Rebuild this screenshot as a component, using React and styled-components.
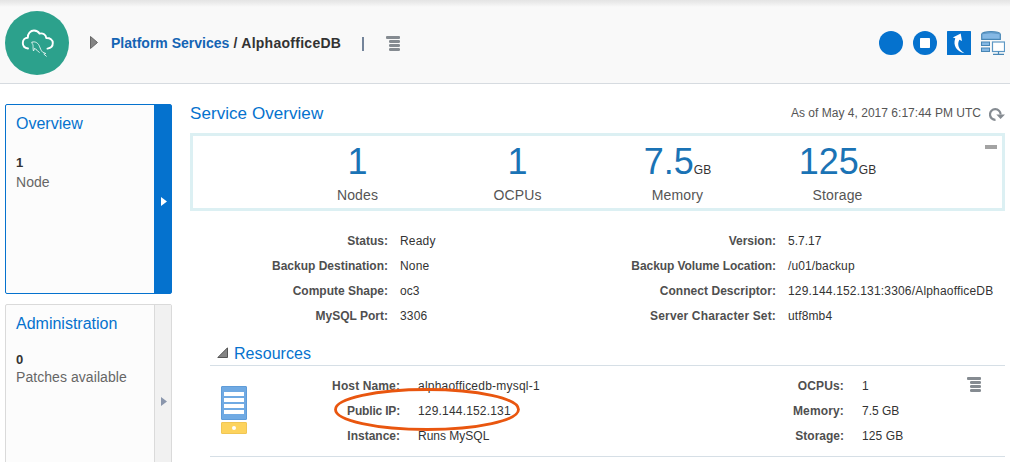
import React from 'react';
import styled, { createGlobalStyle } from 'styled-components';

const GlobalStyle = createGlobalStyle`
  * { box-sizing: border-box; }
  body {
    margin: 0;
    background: #fff;
    font-family: "Liberation Sans", Arial, sans-serif;
    font-size: 12px;
    color: #333;
    overflow: hidden;
  }
`;

const Page = styled.div`
  width: 1010px;
  height: 462px;
  overflow: hidden;
`;

const Header = styled.header`
  display: flex;
  align-items: center;
  height: 84px;
  padding: 2px 5px 0;
  border-bottom: 1px solid #d6dbe0;
  background: linear-gradient(#e4e4e4, #ececec 3px, #f9f9f9 7px);
`;

const Logo = styled.svg`
  width: 64px;
  height: 64px;
  margin-right: 21px;
`;

const Expander = styled.svg`
  width: 8px;
  height: 13px;
  margin-right: 13px;
`;

const Crumbs = styled.h1`
  margin: 0;
  font-size: 14px;
  line-height: 18px;
  font-weight: bold;
  white-space: pre;
  color: #333;
`;

const CrumbLink = styled.span`
  color: #1464b4;
`;

const CrumbCurrent = styled.span`
  letter-spacing: 0.27px;
`;

const Separator = styled.span`
  width: 2px;
  height: 14px;
  margin: 2px 22px 0 21px;
  background: #74849a;
`;

const MenuGlyph = styled.svg`
  flex: none;
  width: 14px;
  height: 15px;
  margin-top: ${(p) => p.$top || 0}px;
`;

const Actions = styled.div`
  display: flex;
  gap: 10px;
  margin-left: auto;

  svg {
    display: block;
    width: 24px;
    height: 24px;
  }
`;

const Body = styled.div`
  display: flex;
  align-items: flex-start;
  padding: 20px 5px 0;
`;

const Sidebar = styled.nav`
  display: flex;
  flex-direction: column;
  gap: 10px;
  width: 167px;
  margin-right: 18px;
`;

const Tile = styled.section`
  display: flex;
  height: 190px;
  border: 1px solid ${(p) => (p.$active ? '#0572ce' : '#dadada')};
  border-radius: 2px;
  background: #fcfcfc;
`;

const TileContent = styled.div`
  flex: 1;
  padding: 9px 0 0 10px;
`;

const TileTitle = styled.h2`
  margin: 0;
  font-size: 16px;
  line-height: 20px;
  font-weight: normal;
  color: #0572ce;
`;

const TileCount = styled.div`
  margin-top: ${(p) => p.$top}px;
  font-size: 13px;
  line-height: 18px;
  font-weight: bold;
`;

const TileLabel = styled.div`
  margin-top: ${(p) => p.$top}px;
  font-size: 14px;
  line-height: 18px;
  letter-spacing: 0.06px;
  color: #666;
`;

const TileStrip = styled.div`
  display: flex;
  align-items: center;
  justify-content: center;
  width: 17px;
  padding: 5px 0 0 2px;
  border-left: 1px solid ${(p) => (p.$active ? '#0572ce' : '#dadada')};
  background: ${(p) => (p.$active ? '#0572ce' : '#f1f1f1')};
  color: ${(p) => (p.$active ? '#fff' : '#8a96ac')};
`;

const Main = styled.main`
  width: 815px;
`;

const TitleRow = styled.div`
  display: flex;
  justify-content: space-between;
  height: 29px;
`;

const Title = styled.h2`
  margin: 0;
  font-size: 17px;
  line-height: 19px;
  font-weight: normal;
  letter-spacing: 0.06px;
  color: #0572ce;
`;

const Timestamp = styled.div`
  display: flex;
  gap: 8px;
  line-height: 18px;
  letter-spacing: 0.02px;
  color: #555;

  svg {
    width: 16px;
    height: 14px;
    margin-top: 3px;
  }
`;

const Summary = styled.section`
  display: flex;
  height: 78px;
  padding: 0 5px 0 84px;
  border: 3px solid #dcf0f3;
`;

const Metric = styled.div`
  width: 160px;
  padding-left: 1px;
  text-align: center;
`;

const MetricValue = styled.div`
  height: 42px;
  margin-top: 5px;
  font-size: 36px;
  line-height: 42px;
  color: #1a73b5;
`;

const Unit = styled.span`
  font-size: 12px;
  line-height: 1;
  color: #333;
`;

const MetricLabel = styled.div`
  margin-top: 3px;
  font-size: 14px;
  line-height: 18px;
  letter-spacing: 0.15px;
  color: #555;
`;

const Collapse = styled.span`
  width: 12px;
  height: 4px;
  margin: 9px 0 0 auto;
  background: #a3a3a3;
`;

const Details = styled.div`
  display: flex;
  padding-top: 18px;
`;

const List = styled.dl`
  display: grid;
  grid-template-columns: ${(p) => p.$label}px auto;
  grid-auto-rows: 25px;
  justify-content: start;
  column-gap: ${(p) => p.$gap}px;
  width: ${(p) => p.$width}px;
  margin: 0;
  line-height: 25px;
  white-space: nowrap;
`;

const Term = styled.dt`
  font-weight: bold;
  text-align: right;
  letter-spacing: ${(p) => p.$tracking || 0}px;
  color: #4f4f4f;
`;

const Value = styled.dd`
  margin: 0;
  letter-spacing: ${(p) => p.$tracking || 0}px;
  color: #333;
`;

const Resources = styled.section`
  margin: 14px 0 0 20px;
`;

const ResourcesHeader = styled.div`
  display: flex;
  align-items: center;
  gap: 6px;
  height: 23px;
  padding: 0 0 1px 7px;
  border-bottom: 1px solid #d6dfe6;

  svg {
    width: 11px;
    height: 11px;
    margin-top: -2px;
  }
`;

const ResourcesTitle = styled.h3`
  margin: 0;
  font-size: 16px;
  line-height: 20px;
  font-weight: normal;
  letter-spacing: 0.07px;
  color: #0572ce;
`;

const Resource = styled.div`
  position: relative;
  display: flex;
  height: 91px;
  padding: 8px 0 0 11px;
  border-bottom: 1px solid #d6dfe6;
`;

const ServerGlyph = styled.svg`
  flex: none;
  width: 26px;
  height: 48px;
  margin: 12px 43px 0 0;
`;

const Highlight = styled.svg`
  position: absolute;
  left: 123px;
  top: 21px;
  width: 188px;
  height: 45px;
`;

function MenuIcon({ top }) {
  return (
    <MenuGlyph $top={top} viewBox="0 0 14 15" fill="#858b91">
      <rect x="0" y="0" width="14" height="3" rx="1" />
      <rect x="3" y="4" width="11" height="3" rx="1.3" />
      <rect x="3" y="8" width="11" height="3" rx="1.3" />
      <rect x="3" y="12" width="11" height="3" rx="1.3" />
    </MenuGlyph>
  );
}

function StripArrow() {
  return (
    <svg width="6" height="9" viewBox="0 0 6 9">
      <path d="M0 0 6 4.5 0 9Z" fill="currentColor" />
    </svg>
  );
}

function SideTile({ title, count, label, active }) {
  return (
    <Tile $active={active}>
      <TileContent>
        <TileTitle>{title}</TileTitle>
        <TileCount $top={active ? 20 : 17}>{count}</TileCount>
        <TileLabel $top={active ? 1 : -1}>{label}</TileLabel>
      </TileContent>
      <TileStrip $active={active}><StripArrow /></TileStrip>
    </Tile>
  );
}

function DetailList({ items, label, gap, width }) {
  return (
    <List $label={label} $gap={gap} $width={width}>
      {items.map(([term, value, termTracking, valueTracking]) => (
        <React.Fragment key={term}>
          <Term $tracking={termTracking}>{term}:</Term>
          <Value $tracking={valueTracking}>{value}</Value>
        </React.Fragment>
      ))}
    </List>
  );
}

const metrics = [
  ['1', '', 'Nodes'],
  ['1', '', 'OCPUs'],
  ['7.5', 'GB', 'Memory'],
  ['125', 'GB', 'Storage'],
];

export default function App() {
  return (
    <Page>
      <GlobalStyle />
      <Header>
        <Logo viewBox="0 0 64 64">
          <circle cx="32" cy="32" r="32" fill="#2ca18c" />
          <g fill="none" stroke="#fff" strokeLinecap="round" strokeLinejoin="round">
            <path d="M23 37.5C19.5 37 17.8 34.8 17.8 32c0-3 2.100-5.200 5-5.200C22.500 22.500 25.500 19.500 29 19.500c2.500 0 4.500 1.200 5.500 3.100 3.700-.8 6.300 1.200 6.800 4.400 3.700-.2 6.500 1.700 6.500 5.100 0 3-2 5.200-5.300 5.500" strokeWidth="1.9" />
            <path d="M27 31.200c2.700-1 5.500.3 7 3.100 1.200 2.200 1.500 4.700 3.500 6.700l3.300 1.500-2 .5 2.500 2.200M27 31.200c-.5 1 .8 1.700 1 3 .2 1.600-.2 3.400.5 5.800l1.200-2.800 1.300 1.300M31 38.500l3.500 3" strokeWidth=".8" strokeDasharray="1.8 .8" />
          </g>
        </Logo>
        <Expander viewBox="0 0 8 13">
          <path d="M.5.500 7.500 6.500.5 12.500Z" fill="#858585" stroke="#666" />
        </Expander>
        <Crumbs>
          <CrumbLink>Platform Services</CrumbLink>
          <CrumbCurrent> / AlphaofficeDB</CrumbCurrent>
        </Crumbs>
        <Separator />
        <MenuIcon top={2} />
        <Actions>
          <svg viewBox="0 0 24 24"><circle cx="12" cy="12" r="12" fill="#0572ce" /></svg>
          <svg viewBox="0 0 24 24">
            <circle cx="12" cy="12" r="12" fill="#0572ce" />
            <rect x="7" y="7" width="10" height="10" rx=".7" fill="#fff" />
          </svg>
          <svg viewBox="0 0 24 24">
            <rect width="24" height="24" rx=".5" fill="#0572ce" />
            <path d="M13.700 2.500 15 10 12.400 8.700C9.800 13 11.500 18.500 17.500 22.200 10 21 5.500 14.500 8.300 7.300L5.800 6.500Z" fill="#fff" />
          </svg>
          <svg viewBox="0 0 24 24">
            <path d="M.7 8.300V3.200C.7 1.600 4.500.7 10 .7s9.300.9 9.300 2.500v5.100Z" fill="#85b8e4" stroke="#4886b5" strokeWidth="1.200" />
            <path d="M2 2.700Q10 .8 18 2.700" fill="none" stroke="#4886b5" strokeWidth=".6" />
            <g fill="#85b8e4" stroke="#4886b5">
              <rect x=".5" y="11" width="8" height="3.500" />
              <rect x=".5" y="17" width="8" height="3.500" />
            </g>
            <rect x="11.500" y="11" width="12" height="9.500" fill="#fff" stroke="#5c97c4" strokeWidth="1.200" />
            <path d="M17.500 20.500v2.500M12 23.400h11" stroke="#4886b5" strokeWidth="1.200" />
          </svg>
        </Actions>
      </Header>
      <Body>
        <Sidebar>
          <SideTile title="Overview" count="1" label="Node" active />
          <SideTile title="Administration" count="0" label="Patches available" />
        </Sidebar>
        <Main>
          <TitleRow>
            <Title>Service Overview</Title>
            <Timestamp>
              As of May 4, 2017 6:17:44 PM UTC
              <svg viewBox="0 0 16 14">
                <path d="M6.500 12.800A5.300 5.300 0 1 1 11.600 7.500" fill="none" stroke="#858b91" strokeWidth="2.200" />
                <path d="M7.300 7.500H16L11.600 12Z" fill="#858b91" />
              </svg>
            </Timestamp>
          </TitleRow>
          <Summary>
            {metrics.map(([value, unit, label]) => (
              <Metric key={label}>
                <MetricValue>{value}{unit && <Unit>{unit}</Unit>}</MetricValue>
                <MetricLabel>{label}</MetricLabel>
              </Metric>
            ))}
            <Collapse />
          </Summary>
          <Details>
            <DetailList
              label={198} gap={12} width={388}
              items={[
                ['Status', 'Ready', 0, 0.2],
                ['Backup Destination', 'None', 0, 0.2],
                ['Compute Shape', 'oc3'],
                ['MySQL Port', '3306', 0, 0.2],
              ]}
            />
            <DetailList
              label={198} gap={12} width={427}
              items={[
                ['Version', '5.7.17'],
                ['Backup Volume Location', '/u01/backup', -0.08, 0.12],
                ['Connect Descriptor', '129.144.152.131:3306/AlphaofficeDB', 0.05, 0.18],
                ['Server Character Set', 'utf8mb4', 0.15, 0.12],
              ]}
            />
          </Details>
          <Resources>
            <ResourcesHeader>
              <svg viewBox="0 0 11 11"><path d="M.8 10.500H10.500V.8Z" fill="#858585" stroke="#555" /></svg>
              <ResourcesTitle>Resources</ResourcesTitle>
            </ResourcesHeader>
            <Resource>
              <ServerGlyph viewBox="0 0 26 48">
                <rect x=".5" y=".5" width="25" height="33" rx=".5" fill="#70aae3" stroke="#5f9cd8" />
                <path d="M3 8h20M3 14h20M3 20h20M3 26h20" stroke="#fff" strokeWidth="4" />
                <rect x=".5" y="36.500" width="25" height="11" rx=".5" fill="#fdd35d" stroke="#f0c655" />
                <circle cx="13" cy="42" r="2" fill="#fff" />
              </ServerGlyph>
              <DetailList
                label={110} gap={18} width={454}
                items={[
                  ['Host Name', 'alphaofficedb-mysql-1', 0.12, 0.22],
                  ['Public IP', '129.144.152.131', -0.18, 0.18],
                  ['Instance', 'Runs MySQL'],
                ]}
              />
              <DetailList
                label={100} gap={18} width={223}
                items={[
                  ['OCPUs', '1', 0.15],
                  ['Memory', '7.5 GB', 0.15],
                  ['Storage', '125 GB', 0, 0.1],
                ]}
              />
              <MenuIcon top={3} />
              <Highlight viewBox="0 0 188 45">
                <ellipse cx="94" cy="22.500" rx="91.500" ry="20" fill="none" stroke="#e9560f" strokeWidth="2.800" />
              </Highlight>
            </Resource>
          </Resources>
        </Main>
      </Body>
    </Page>
  );
}
